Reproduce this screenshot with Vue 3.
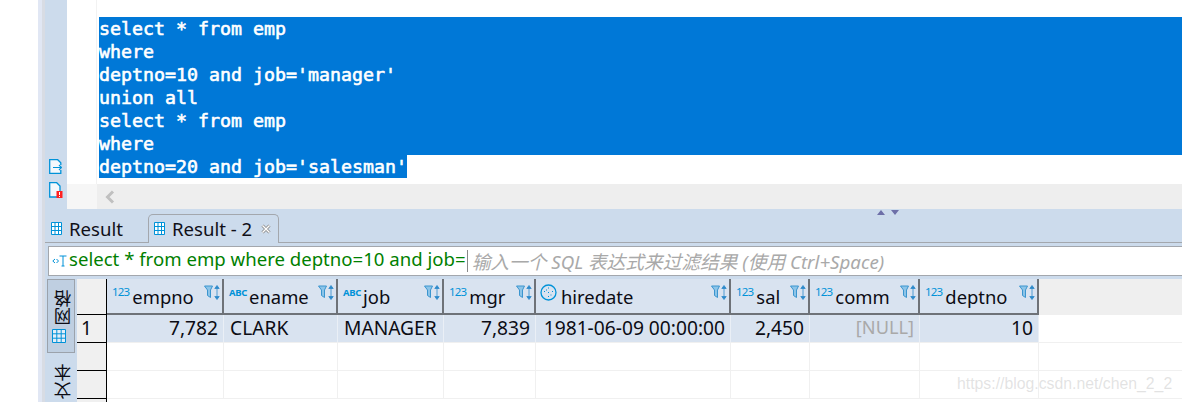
<script setup>
const sql = ["select * from emp", "where", "deptno=10 and job='manager'", "union all", "select * from emp", "where"];
const cols = [
  { name: "empno", type: "123", w: 117, val: "7,782", right: true },
  { name: "ename", type: "ABC", w: 114, val: "CLARK" },
  { name: "job", type: "ABC", w: 106, val: "MANAGER" },
  { name: "mgr", type: "123", w: 92, val: "7,839", right: true },
  { name: "hiredate", type: "time", w: 195, val: "1981-06-09 00:00:00", right: true },
  { name: "sal", type: "123", w: 79, val: "2,450", right: true },
  { name: "comm", type: "123", w: 110, val: "[NULL]", right: true, nul: true },
  { name: "deptno", type: "123", w: 119, val: "10", right: true },
];
const template = cols.map((c) => c.w + "px").join(" ") + " 1fr";
const emptyRows = [1, 2];
</script>

<template>
  <div class="page">
    <div class="outer"></div>
    <div class="strip"></div>
    <div class="main">
      <section class="editor">
        <div class="gutter">
          <svg class="doc-a" width="13" height="15" viewBox="0 0 13 15">
            <path d="M.7.700h8l3.100 3.100v10.500H.7z" fill="#f4f8fc" stroke="none" />
            <path d="M11.800 6V3.800L8.700.7H.7v13.600h11.100V11" fill="none" stroke="#0092d8" stroke-width="1.300" />
            <path d="M4 8.500h8.500M10 6l2.500 2.500L10 11" fill="none" stroke="#0092d8" stroke-width="1.200" />
          </svg>
          <svg class="doc-b" width="14" height="16" viewBox="0 0 14 16">
            <path d="M.7.700h7l3.300 3.300v11H.7z" fill="#f4f8fc" stroke="#0092d8" stroke-width="1.300" />
            <rect x="7.500" y="9" width="6" height="7" fill="#f22" />
            <path d="M10.500 10v3M10.500 14v1" stroke="#fff" />
          </svg>
        </div>
        <div class="code-col">
          <div class="code-area">
            <div class="margin"></div>
            <div class="code">
              <div v-for="(l, i) in sql" :key="i" class="line">{{ l }}</div>
              <div class="line last">deptno=20 and job='salesman'</div>
            </div>
          </div>
          <div class="hscroll">
            <div class="hscroll-left"></div>
            <div class="hscroll-track">
              <svg width="12" height="14" viewBox="0 0 12 14"><path d="M10 1.500 4.500 7l5.500 5.500" fill="none" stroke="#c0c0c0" stroke-width="3" /></svg>
            </div>
          </div>
        </div>
      </section>

      <section class="panel">
        <div class="sash">
          <svg width="22" height="5" viewBox="0 0 22 5">
            <path d="M0 5 4 0l4 5zM14 0h8l-4 5z" fill="#6d6fa8" />
          </svg>
        </div>
        <div class="tabs">
          <div class="tab">
            <svg class="grid-ico" width="11" height="13" viewBox="0 0 11 13"><path d="M.5.500h10v12H.5zM.5 4.500h10M.5 8.500h10M4 .5v12M7.500.5v12" fill="#fff" stroke="#0092d8" /></svg>
            <span>Result</span>
          </div>
          <div class="tab active">
            <svg class="grid-ico" width="11" height="13" viewBox="0 0 11 13"><path d="M.5.500h10v12H.5zM.5 4.500h10M.5 8.500h10M4 .5v12M7.500.5v12" fill="#fff" stroke="#0092d8" /></svg>
            <span>Result - 2</span>
            <svg class="close" width="10" height="10" viewBox="0 0 10 10"><path d="M1.500 1.500l7 7M8.500 1.500l-7 7" stroke="#8a8a8a" stroke-width="3" /><path d="M1.500 1.500l7 7M8.500 1.500l-7 7" stroke="#fff" stroke-width="1.400" /></svg>
          </div>
        </div>
        <div class="filter">
          <svg class="t-ico" width="15" height="14" viewBox="0 0 15 14">
            <path d="M3 5 .8 7 3 9M4.500 5l2 2-2 2" fill="none" stroke="#0092d8" />
            <path d="M7.500 2h7M11 2v10M9.500 12h3" fill="none" stroke="#0092d8" />
          </svg>
          <span class="filter-sql">select * from emp where deptno=10 and job=</span>
          <span class="caret"></span>
          <span class="hint">输入一个 SQL 表达式来过滤结果 (使用 Ctrl+Space)</span>
        </div>
        <div class="data">
          <aside class="views">
            <div class="view on">
              <span class="vtext">网格</span>
              <svg width="14" height="14" viewBox="0 0 14 14"><path d="M.5.500h13v13H.5zM.5 4.800h13M.5 9.200h13M4.800.5v13M9.200.5v13" fill="#e4eef8" stroke="#0092d8" /></svg>
            </div>
            <div class="view"><span class="vtext">文本</span></div>
          </aside>
          <div class="table">
            <div class="row-heads">
              <div class="corner"></div>
              <div class="rh first">1</div>
              <div v-for="r in emptyRows" :key="r" class="rh"></div>
            </div>
            <div class="rows">
              <div class="row head" :style="{ gridTemplateColumns: template }">
                <div v-for="c in cols" :key="c.name" class="hcell">
                  <svg v-if="c.type === 'time'" class="clock" width="17" height="17" viewBox="0 0 17 17">
                    <circle cx="8.500" cy="8.500" r="7.500" fill="none" stroke="#0092d8" stroke-width="1.300" />
                    <path d="M8.500 3.500v1M4 7.500h1M12 7.500h1M8 8.500h1M6 6h1M10.500 11h1M8.500 12v1" stroke="#0092d8" />
                  </svg>
                  <span v-else class="type" :class="{ abc: c.type === 'ABC' }">{{ c.type }}</span>
                  <span class="hname">{{ c.name }}</span>
                  <svg class="sort" width="17" height="15" viewBox="0 0 17 15">
                    <path d="M.5 1h8L6.500 5v7.500l-3-2V5z" fill="#8cc4e8" stroke="#3b95cf" />
                    <path d="M13 .5 10.800 3.500h4.400zM13 14.500l-2.200-3h4.400zM13 3v9" fill="#2d8acb" stroke="#2d8acb" stroke-width=".8" />
                  </svg>
                </div>
                <div class="hrest"></div>
              </div>
              <div class="row sel" :style="{ gridTemplateColumns: template }">
                <div v-for="c in cols" :key="c.name" class="cell filled" :class="{ right: c.right, nul: c.nul }">{{ c.val }}</div>
                <div class="rest"></div>
              </div>
              <div v-for="r in emptyRows" :key="r" class="row" :style="{ gridTemplateColumns: template }">
                <div v-for="c in cols" :key="c.name" class="cell"></div>
                <div class="rest"></div>
              </div>
            </div>
          </div>
        </div>
      </section>
    </div>
    <div class="watermark">https://blog.csdn.net/chen_2_2</div>
  </div>
</template>

<style>
html, body { margin: 0; background: #fff; overflow: hidden; }
</style>

<style scoped>
.page {
  position: relative;
  width: 1182px;
  height: 402px;
  display: flex;
  overflow: hidden;
  background: #fff;
  font-family: "Noto Sans", "Noto Sans CJK SC", sans-serif;
  color: #0c0c14;
}
.outer { width: 38px; background: #fff; }
.strip { width: 7px; background: #e1e7f4; border-right: 3px solid #d8dce4; box-sizing: border-box; }
.main { flex: 1; min-width: 0; display: flex; flex-direction: column; }

.editor { height: 209px; display: flex; }
.gutter {
  width: 22px;
  background: #ccdbec;
  display: flex;
  flex-direction: column;
  align-items: flex-start;
  padding: 159px 0 0 4px;
  box-sizing: border-box;
  gap: 8px;
}
.code-col { flex: 1; min-width: 0; display: flex; flex-direction: column; }
.code-area { height: 184px; display: flex; background: #fff; }
.margin { width: 29px; border-right: 1px solid #f2f2f2; }
.code {
  flex: 1;
  padding: 17px 0 0 2px;
  font-family: "DejaVu Sans Mono", monospace;
  font-size: 18.27px;
  line-height: 23px;
  color: #fff;
  -webkit-text-stroke: .6px #fff;
  white-space: pre;
}
.line { height: 23px; background: #0078d7; }
.line.last { width: 308px; }
.hscroll { height: 25px; display: flex; }
.hscroll-left { width: 30px; background: #f6f6f6; }
.hscroll-track {
  flex: 1;
  background: #eeeeee;
  padding: 6px 0 0 6px;
  box-sizing: border-box;
}
.hscroll-track svg { display: block; }

.panel { flex: 1; background: #ccdbec; display: flex; flex-direction: column; position: relative; min-height: 0; }
.sash { position: absolute; left: 832px; top: 0; line-height: 0; }
.tabs {
  height: 34px;
  display: flex;
  align-items: flex-end;
  box-sizing: border-box;
  border-bottom: 1px solid #a3a7ad;
}
.tab {
  height: 28px;
  display: flex;
  align-items: center;
  gap: 7px;
  font-size: 18.600px;
  box-sizing: border-box;
  padding-left: 6px;
  width: 103px;
  color: #101018;
}
.tab.active {
  width: 131px;
  height: 29px;
  margin-bottom: -1px;
  border: 1px solid #a3a7ad;
  border-bottom: 0;
  border-radius: 5px 5px 0 0;
  padding: 0 0 1px 5px;
  background: #ccdbec;
}
.grid-ico { flex: none; }
.close { margin-left: 2px; flex: none; }

.filter {
  height: 30px;
  margin: 3px 0 0 3px;
  background: #fff;
  border: 1px solid #a3a7ad;
  border-right: 0;
  box-sizing: border-box;
  display: flex;
  align-items: center;
  font-size: 18.700px;
  white-space: nowrap;
}
.t-ico { margin-left: 3px; flex: none; }
.filter-sql { color: #008000; margin: 0 0 5px 2px; font-size: 18.600px; }
.caret { width: 1px; height: 22px; background: #888; margin: 0 4px 1px 1px; }
.hint { color: #a9a9a9; font-style: italic; margin-bottom: 2px; }

.data { flex: 1; display: flex; padding: 3px 0 0 2px; min-height: 0; }
.views { width: 30px; flex: none; display: flex; flex-direction: column; }
.view {
  width: 28px;
  display: flex;
  flex-direction: column;
  align-items: center;
  box-sizing: border-box;
  padding: 10px 0 0 3px;
}
.view.on { height: 74px; background: #bfcfe1; border: 1px solid #9ba2ab; gap: 4px; }
.view:not(.on) { padding-top: 11px; }
.view svg { margin-left: -7px; }
.vtext {
  writing-mode: vertical-rl;
  transform: rotate(180deg);
  font-size: 17.500px;
  line-height: 20px;
  font-family: "Noto Sans CJK SC", sans-serif;
}

.table { flex: 1; min-width: 0; display: flex; background: #fff; }
.row-heads {
  width: 30px;
  flex: none;
  background: #f0f0f0;
  border-right: 1px solid #000;
  box-sizing: border-box;
}
.corner { height: 36px; border-bottom: 1px solid #000; box-sizing: border-box; background: #f0f0f0; }
.rh {
  height: 28px;
  border-bottom: 1px solid #000;
  box-sizing: border-box;
  font-size: 19.200px;
  line-height: 25px;
  padding-left: 4px;
}
.rows { flex: 1; min-width: 0; }
.row { display: grid; height: 28px; }
.row.head { height: 36px; }
.hcell {
  background: #d9e3f0;
  border-right: 2px solid #6e7278;
  border-bottom: 2px solid #6e7278;
  box-sizing: border-box;
  display: flex;
  align-items: flex-start;
  position: relative;
  padding-left: 5px;
}
.type { font-size: 11.500px; color: #0092d8; line-height: 12px; margin-top: 7px; margin-right: 3px; letter-spacing: -.8px; }
.type.abc { font-size: 9.500px; font-weight: 700; letter-spacing: -.3px; margin-top: 8px; margin-right: 2px; }
.clock { margin-top: 5px; margin-right: 4px; flex: none; margin-left: -1px; }
.hname { font-size: 18.400px; line-height: 25px; margin-top: 5px; }
.sort { position: absolute; right: 1px; top: 6px; }
.hrest { background: #efefef; }
.cell {
  border-right: 1px solid #f0f0f0;
  border-bottom: 1px solid #f0f0f0;
  box-sizing: border-box;
  font-size: 19.200px;
  line-height: 25px;
  padding: 0 5px 0 6px;
  white-space: nowrap;
}
.cell.filled { background: #d9e3f0; border-right: 1px solid #eaeff6; }
.cell.right { text-align: right; }
.cell.nul { color: #a9a9a9; font-size: 18.200px; }
.rest { border-bottom: 1px solid #f0f0f0; }
.watermark {
  position: absolute;
  left: 957px;
  top: 375px;
  font-family: "Liberation Sans", sans-serif;
  font-size: 15.800px;
  color: rgba(180, 180, 180, .38);
  white-space: nowrap;
}
</style>
